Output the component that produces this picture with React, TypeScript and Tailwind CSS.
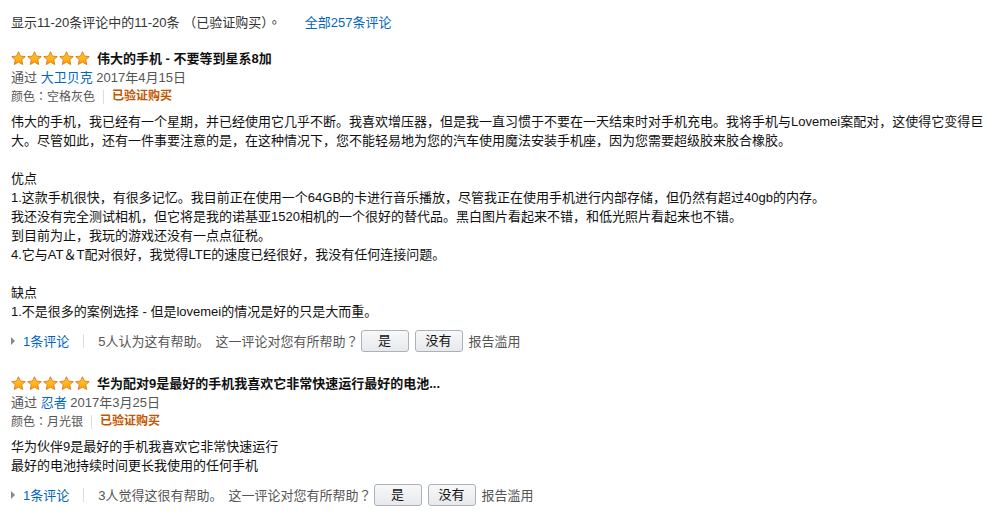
import React from 'react';

type Review = {
  title: string;
  author: string;
  date: string;
  color: string;
  lines: string[];
  helpful: string;
};

const reviews: Review[] = [
  {
    title: '伟大的手机 - 不要等到星系8加',
    author: '大卫贝克',
    date: '2017年4月15日',
    color: '空格灰色',
    lines: [
      '伟大的手机，我已经有一个星期，并已经使用它几乎不断。我喜欢增压器，但是我一直习惯于不要在一天结束时对手机充电。我将手机与Lovemei案配对，这使得它变得巨',
      '大。尽管如此，还有一件事要注意的是，在这种情况下，您不能轻易地为您的汽车使用魔法安装手机座，因为您需要超级胶来胶合橡胶。',
      '',
      '优点',
      '1.这款手机很快，有很多记忆。我目前正在使用一个64GB的卡进行音乐播放，尽管我正在使用手机进行内部存储，但仍然有超过40gb的内存。',
      '我还没有完全测试相机，但它将是我的诺基亚1520相机的一个很好的替代品。黑白图片看起来不错，和低光照片看起来也不错。',
      '到目前为止，我玩的游戏还没有一点点征税。',
      '4.它与AT＆T配对很好，我觉得LTE的速度已经很好，我没有任何连接问题。',
      '',
      '缺点',
      '1.不是很多的案例选择 - 但是lovemei的情况是好的只是大而重。',
    ],
    helpful: '5人认为这有帮助。',
  },
  {
    title: '华为配对9是最好的手机我喜欢它非常快速运行最好的电池...',
    author: '忍者',
    date: '2017年3月25日',
    color: '月光银',
    lines: ['华为伙伴9是最好的手机我喜欢它非常快速运行', '最好的电池持续时间更长我使用的任何手机'],
    helpful: '3人觉得这很有帮助。',
  },
];

// centred full-width punctuation (like the original's font)
function P({ ch }: { ch: string }) {
  return <span className="font-['Noto_Sans_CJK_TC',sans-serif]">{ch}</span>;
}

function Star({ id }: { id: string }) {
  return (
    <svg width="15" height="15" viewBox="0 0 24 24">
      <defs>
        <linearGradient id={id} x1="0" y1="0" x2="0" y2="1">
          <stop offset="0" stopColor="#ffcf33" />
          <stop offset="1" stopColor="#ff9f00" />
        </linearGradient>
      </defs>
      <path
        d="M12 1.2l3.2 7 7.6.7-5.8 5.1 1.8 7.6L12 17.7l-6.8 3.9 1.8-7.6-5.8-5.1 7.6-.7z"
        fill={`url(#${id})`}
        stroke="#dc7a1b"
        strokeWidth="1.5"
        strokeLinejoin="round"
      />
    </svg>
  );
}

function Stars({ prefix }: { prefix: string }) {
  return (
    <div className="flex items-center gap-[1px]">
      {[0, 1, 2, 3, 4].map((i) => (
        <Star key={i} id={`${prefix}-star-${i}`} />
      ))}
    </div>
  );
}

function ReviewBlock({ review, index }: { review: Review; index: number }) {
  return (
    <div>
      {/* Title */}
      <div className="flex items-center h-[19px]">
        <Stars prefix={`r${index}`} />
        <span className="ml-[7px] font-bold text-[#111] whitespace-nowrap">{review.title}</span>
      </div>

      {/* Author + date */}
      <div className="h-[19px] text-[#555] whitespace-nowrap">
        通过 <span className="text-[#0066c0]">{review.author}</span> {review.date}
      </div>

      {/* Color + verified */}
      <div className="flex items-center h-[19px] text-[12px] whitespace-nowrap">
        <span className="text-[#555]">
          颜色<P ch="：" />
          {review.color}
        </span>
        <span className="mx-[8px] w-px h-[14px] bg-[#ddd]" />
        <span className="font-bold text-[#c45500]">已验证购买</span>
      </div>

      {/* Body */}
      <div className="mt-[6px] text-[#111]">
        {review.lines.map((line, i) => (
          <div key={i} className="h-[19px] whitespace-nowrap">
            {line}
          </div>
        ))}
      </div>

      {/* Footer */}
      <div className="mt-[9px] flex items-center h-[22px] whitespace-nowrap text-[#555]">
        <span className="w-0 h-0 border-y-[4px] border-y-transparent border-l-[4px] border-l-[#888]" />
        <span className="ml-[8px] text-[#0066c0]">1条评论</span>
        <span className="mx-[14px] w-px h-[14px] bg-[#ddd]" />
        <span>{review.helpful}</span>
        <span className="ml-[6px]">
          这一评论对您有所帮助<P ch="？" />
        </span>
        <button className="ml-[2px] w-[48px] h-[22px] rounded-[3px] border border-[#adb1b8] bg-gradient-to-b from-[#f7f8fa] to-[#e7e9ec] text-[#111] text-[13px] leading-[20px]">
          是
        </button>
        <button className="ml-[6px] w-[48px] h-[22px] rounded-[3px] border border-[#adb1b8] bg-gradient-to-b from-[#f7f8fa] to-[#e7e9ec] text-[#111] text-[13px] leading-[20px]">
          没有
        </button>
        <span className="ml-[6px]">报告滥用</span>
      </div>
    </div>
  );
}

export default function App() {
  return (
    <div className="min-h-[517px] bg-white pl-[11px] pt-[12px] text-[13px] leading-[19px] text-[#333] font-['Liberation_Sans','Noto_Sans_CJK_SC',sans-serif]">
      <div className="h-[19px] whitespace-nowrap">
        显示11-20条评论中的11-20条 <P ch="（" />已验证购买<P ch="）" /><P ch="。" />
        <span className="ml-[24px] text-[#0066c0]">全部257条评论</span>
      </div>

      <div className="mt-[18px]">
        <ReviewBlock review={reviews[0]} index={0} />
      </div>
      <div className="mt-[22px]">
        <ReviewBlock review={reviews[1]} index={1} />
      </div>
    </div>
  );
}
